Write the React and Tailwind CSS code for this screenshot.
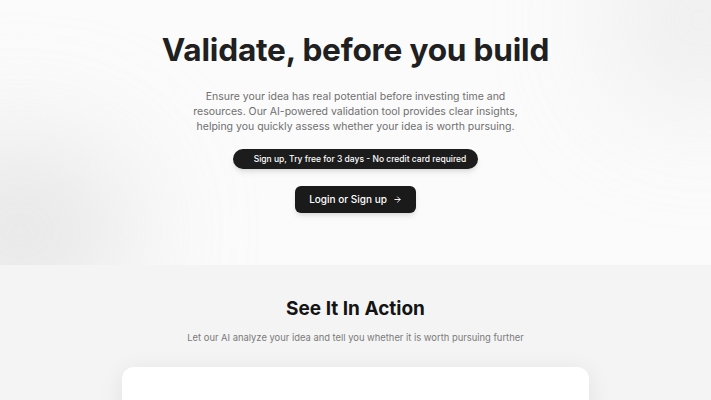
import React from 'react';

export default function App() {
  return (
    <div className="min-h-screen bg-[#f4f4f4] font-['Inter',sans-serif]">
      {/* Hero */}
      <section className="relative overflow-hidden bg-[#fbfbfb] h-[265px] flex flex-col items-center">
        <div className="absolute -left-[90px] top-[150px] w-[220px] h-[160px] rounded-full bg-[#d9d9d9] blur-3xl opacity-70" />
        <div className="absolute -right-[70px] -top-[60px] w-[160px] h-[160px] rounded-full bg-[#dcdcdc] blur-3xl opacity-60" />

        <div className="relative z-10 flex flex-col items-center">
          <h1 className="mt-[29px] text-[31.6px] leading-[42px] font-bold tracking-[-0.2px] text-[#202020]">
            Validate, before you build
          </h1>
          <p className="mt-[18px] w-[330px] text-center text-[10.5px] leading-[15px] text-[#6f6f6f]">
            Ensure your idea has real potential before investing time and resources. Our AI-powered validation tool provides clear insights, helping you quickly assess whether your idea is worth pursuing.
          </p>
          <div className="mt-[15px] h-[20px] flex items-center rounded-full bg-[#1c1c1c] pl-[21px] pr-[12px] text-[8.5px] font-medium text-white shadow-md">
            Sign up, Try free for 3 days - No credit card required
          </div>
          <button className="mt-[17px] h-[27px] w-[121px] flex items-center justify-center gap-[6px] rounded-md bg-[#1a1a1a] text-[10px] font-medium text-white shadow-md">
            Login or Sign up
            <svg width="9" height="9" viewBox="0 0 24 24" fill="none" stroke="currentColor" strokeWidth="2.5" strokeLinecap="round" strokeLinejoin="round">
              <path d="M5 12h14" />
              <path d="m12 5 7 7-7 7" />
            </svg>
          </button>
        </div>
      </section>

      {/* See It In Action */}
      <section className="flex flex-col items-center">
        <h2 className="mt-[30px] text-[19px] leading-[28px] font-bold text-[#141414]">See It In Action</h2>
        <p className="mt-[8px] text-[9.4px] text-[#7a7a7a]">
          Let our AI analyze your idea and tell you whether it is worth pursuing further
        </p>
        <div className="mt-[22px] w-[467px] h-[200px] rounded-xl bg-white shadow-[0_4px_24px_rgba(0,0,0,0.08)]" />
      </section>
    </div>
  );
}
